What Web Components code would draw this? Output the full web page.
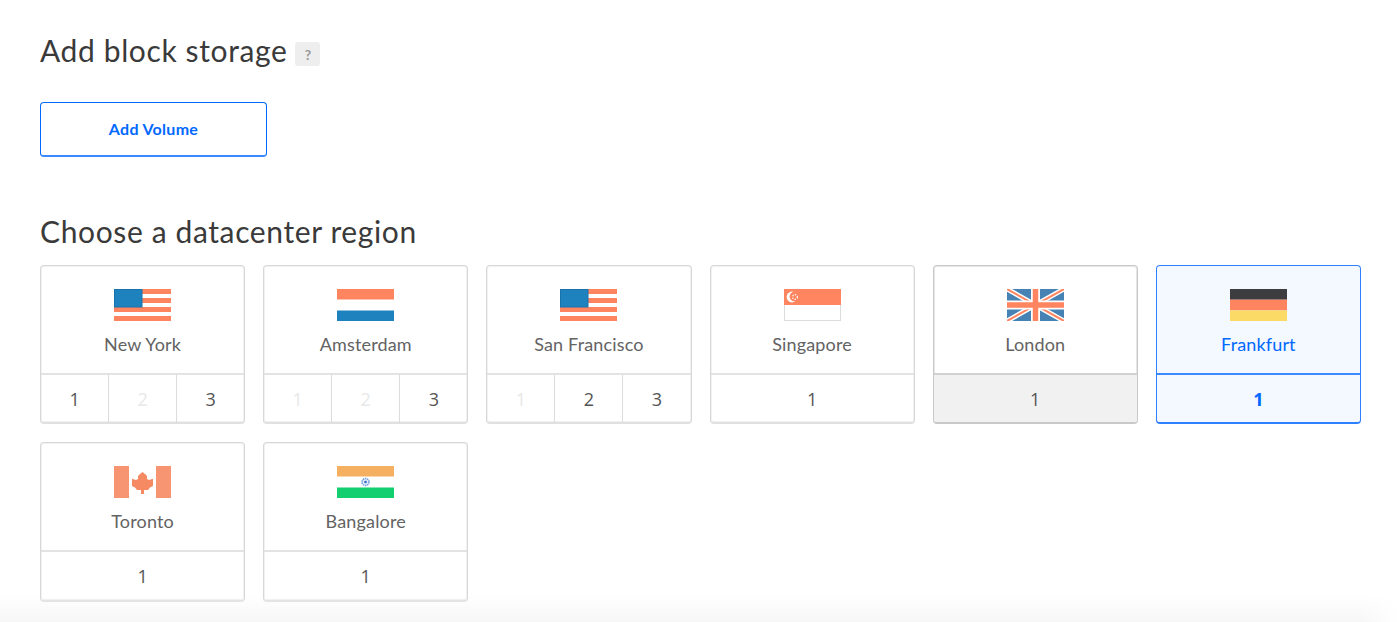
<!DOCTYPE html>
<html>
<head>
<meta charset="utf-8">
<title>Create droplet</title>
<style>
    html, body { margin: 0; background: #fff; }
    body { height: 622px; overflow: hidden; font-family: "Lato", "Liberation Sans", sans-serif; color: #555; }
</style>
</head>
<body>
<droplet-page>
    <section-title help>Add block storage</section-title>
    <add-button>Add Volume</add-button>
    <section-title class="second">Choose a datacenter region</section-title>
    <region-grid>
        <region-card name="New York" flag="us">
            <count-cell>1</count-cell><count-cell off>2</count-cell><count-cell>3</count-cell>
        </region-card>
        <region-card name="Amsterdam" flag="nl">
            <count-cell off>1</count-cell><count-cell off>2</count-cell><count-cell>3</count-cell>
        </region-card>
        <region-card name="San Francisco" flag="us">
            <count-cell off>1</count-cell><count-cell>2</count-cell><count-cell>3</count-cell>
        </region-card>
        <region-card name="Singapore" flag="sg"><count-cell>1</count-cell></region-card>
        <region-card name="London" flag="uk" state="hover"><count-cell>1</count-cell></region-card>
        <region-card name="Frankfurt" flag="de" state="selected"><count-cell>1</count-cell></region-card>
        <region-card name="Toronto" flag="ca" tall><count-cell>1</count-cell></region-card>
        <region-card name="Bangalore" flag="in" tall><count-cell>1</count-cell></region-card>
    </region-grid>
</droplet-page>
<bottom-fade></bottom-fade>

<script>
const RED = '#ff8560';
const BLUE = '#1e82bf';

const FLAGS = {
    us: `<g fill="${RED}">
            <rect y="0" width="57" height="5"/><rect y="9" width="57" height="5"/>
            <rect y="18" width="57" height="5"/><rect y="27" width="57" height="5"/>
        </g>
        <rect x=".5" y=".5" width="27.5" height="17.5" fill="${BLUE}" stroke="#1a72ad"/>`,
    nl: `<rect width="57" height="10.5" fill="${RED}"/>
        <rect y="21.5" width="57" height="10.5" fill="${BLUE}"/>`,
    sg: `<rect x=".5" y=".5" width="56" height="31" fill="#fff" stroke="#dcdcdc"/>
        <rect width="57" height="16" fill="${RED}"/>
        <circle cx="8" cy="8" r="5.4" fill="#fff"/>
        <circle cx="10.400" cy="7.600" r="4.800" fill="${RED}"/>
        <circle cx="11" cy="8" r="2.400" fill="none" stroke="#fff" stroke-width="1.200" stroke-dasharray="1.300 1.200"/>`,
    uk: `<rect width="57" height="32" fill="#4682b4"/>
        <path d="M0 0L57 32M57 0L0 32" stroke="#fff" stroke-width="5"/>
        <path d="M0 0L57 32M57 0L0 32" stroke="${RED}" stroke-width="2"/>
        <path d="M28.500 0V32M0 16H57" stroke="#fff" stroke-width="9"/>
        <path d="M28.500 0V32M0 16H57" stroke="${RED}" stroke-width="5.500"/>`,
    de: `<rect width="57" height="10.700" fill="#3d3d3f"/>
        <rect y="10.700" width="57" height="10.700" fill="${RED}"/>
        <rect y="21.400" width="57" height="10.600" fill="#fbdb65"/>`,
    ca: `<rect width="15" height="32" fill="#f79573"/>
        <rect x="42" width="15" height="32" fill="#f79573"/>
        <path fill="#f58a63" d="M28.500 6L31 8L33 10V13L35 14L39 12.700V20L36 21.500L34 24H30V28H27V24H23L21 21.500L18 20V12.700L22 14L24 13V10L26 8Z"/>`,
    in: `<rect width="57" height="10.500" fill="#f4b060"/>
        <rect y="21.500" width="57" height="10.500" fill="#14cf6f"/>
        <circle cx="28.500" cy="16" r="3.500" fill="#dfe9f9" stroke="#6d9be0" stroke-width="1.500" stroke-dasharray="1.500 .700"/>
        <circle cx="28.500" cy="16" r="1.300" fill="#2d6cc8"/>`
};

class DropletPage extends HTMLElement {
    connectedCallback() {
        this.attachShadow({ mode: 'open' });
        this.shadowRoot.innerHTML = `
            <style>
                :host {
                    display: flex;
                    flex-direction: column;
                    align-items: flex-start;
                    padding: 30px 39px 0 40px;
                }
            </style>
            <slot></slot>
        `;
    }
}

class SectionTitle extends HTMLElement {
    connectedCallback() {
        this.attachShadow({ mode: 'open' });
        const second = this.classList.contains('second');
        this.shadowRoot.innerHTML = `
            <style>
                :host {
                    display: flex;
                    align-items: center;
                    height: 40px;
                    margin: ${second ? '54px 0 14px' : '0 0 32px'};
                    font-size: 30px;
                    font-weight: 400;
                    color: #3a3a3a;
                    letter-spacing: .62px;
                }
                .help {
                    display: flex;
                    align-items: center;
                    justify-content: center;
                    width: 25px;
                    height: 24px;
                    margin: 8px 0 0 8px;
                    background: #eee;
                    border-radius: 3px;
                    font-size: 14px;
                    font-weight: 700;
                    color: #999;
                    letter-spacing: 0;
                }
            </style>
            <slot></slot>
            ${this.hasAttribute('help') ? '<span class="help">?</span>' : ''}
        `;
    }
}

class AddButton extends HTMLElement {
    connectedCallback() {
        this.attachShadow({ mode: 'open' });
        this.shadowRoot.innerHTML = `
            <style>
                :host {
                    display: flex;
                    align-items: center;
                    justify-content: center;
                    box-sizing: border-box;
                    width: 227px;
                    height: 55px;
                    padding-bottom: 1px;
                    border: 1px solid #0069ff;
                    border-bottom: 2px solid #3b88ff;
                    border-radius: 4px;
                    font-size: 16px;
                    font-weight: 700;
                    letter-spacing: .3px;
                    color: #0069ff;
                }
            </style>
            <slot></slot>
        `;
    }
}

class RegionGrid extends HTMLElement {
    connectedCallback() {
        this.attachShadow({ mode: 'open' });
        this.shadowRoot.innerHTML = `
            <style>
                :host {
                    display: grid;
                    grid-template-columns: repeat(6, 1fr);
                    column-gap: 18px;
                    row-gap: 18px;
                    width: 100%;
                }
            </style>
            <slot></slot>
        `;
    }
}

class RegionCard extends HTMLElement {
    connectedCallback() {
        this.attachShadow({ mode: 'open' });
        const name = this.getAttribute('name');
        const flag = FLAGS[this.getAttribute('flag')];
        this.shadowRoot.innerHTML = `
            <style>
                :host {
                    display: flex;
                    flex-direction: column;
                    box-sizing: border-box;
                    height: 159px;
                    border: 1px solid #d8d8d8;
                    border-bottom: 2px solid #e0e0e0;
                    border-radius: 4px;
                    overflow: hidden;
                    background: #fff;
                    box-shadow: inset 0 0 0 1px #f1f1f1;
                }
                :host([tall]) { height: 160px; }
                .top {
                    display: flex;
                    flex-direction: column;
                    align-items: center;
                    height: 107px;
                    padding-top: 23px;
                    box-sizing: border-box;
                    font-size: 18px;
                    letter-spacing: .15px;
                    color: #636363;
                }
                svg { display: block; width: 57px; height: 32px; margin-bottom: 12px; }
                .counts {
                    display: flex;
                    flex: 1;
                    border-top: 2px solid #e3e3e3;
                }
                :host([state="hover"]) { border-color: #c9c9c9; box-shadow: inset 0 0 0 1px #e6e6e6; }
                :host([state="hover"]) .counts { background: #f1f1f1; border-top-color: #d2d2d2; }
                :host([state="selected"]) { border-color: #2f80ff; background: #f4f8ff; box-shadow: none; }
                :host([state="selected"]) .top { color: #0069ff; }
                :host([state="selected"]) .counts { border-top-color: #3b88ff; color: #0069ff; font-weight: 700; }
                ::slotted(count-cell:not(:first-child)) { border-left: 1px solid #dcdcdc; }
            </style>
            <div class="top">
                <svg viewBox="0 0 57 32">${flag}</svg>
                <span>${name}</span>
            </div>
            <div class="counts"><slot></slot></div>
        `;
    }
}

class CountCell extends HTMLElement {
    connectedCallback() {
        this.attachShadow({ mode: 'open' });
        this.shadowRoot.innerHTML = `
            <style>
                :host {
                    flex: 1;
                    display: flex;
                    align-items: center;
                    justify-content: center;
                    font-family: "Open Sans", "Liberation Sans", sans-serif;
                    font-size: 18px;
                    color: inherit;
                }
                :host([off]) { color: #e8e8e8; }
            </style>
            <slot></slot>
        `;
    }
}

class BottomFade extends HTMLElement {
    connectedCallback() {
        this.attachShadow({ mode: 'open' });
        this.shadowRoot.innerHTML = `
            <style>
                :host {
                    position: absolute;
                    left: 0;
                    right: 0;
                    top: 596px;
                    height: 26px;
                    background: linear-gradient(rgba(247,247,247,0), #f7f7f7);
                    -webkit-mask-image: linear-gradient(to left, transparent, #000 40px);
                    pointer-events: none;
                }
            </style>
        `;
    }
}

customElements.define('droplet-page', DropletPage);
customElements.define('section-title', SectionTitle);
customElements.define('add-button', AddButton);
customElements.define('region-grid', RegionGrid);
customElements.define('region-card', RegionCard);
customElements.define('count-cell', CountCell);
customElements.define('bottom-fade', BottomFade);
</script>
</body>
</html>
